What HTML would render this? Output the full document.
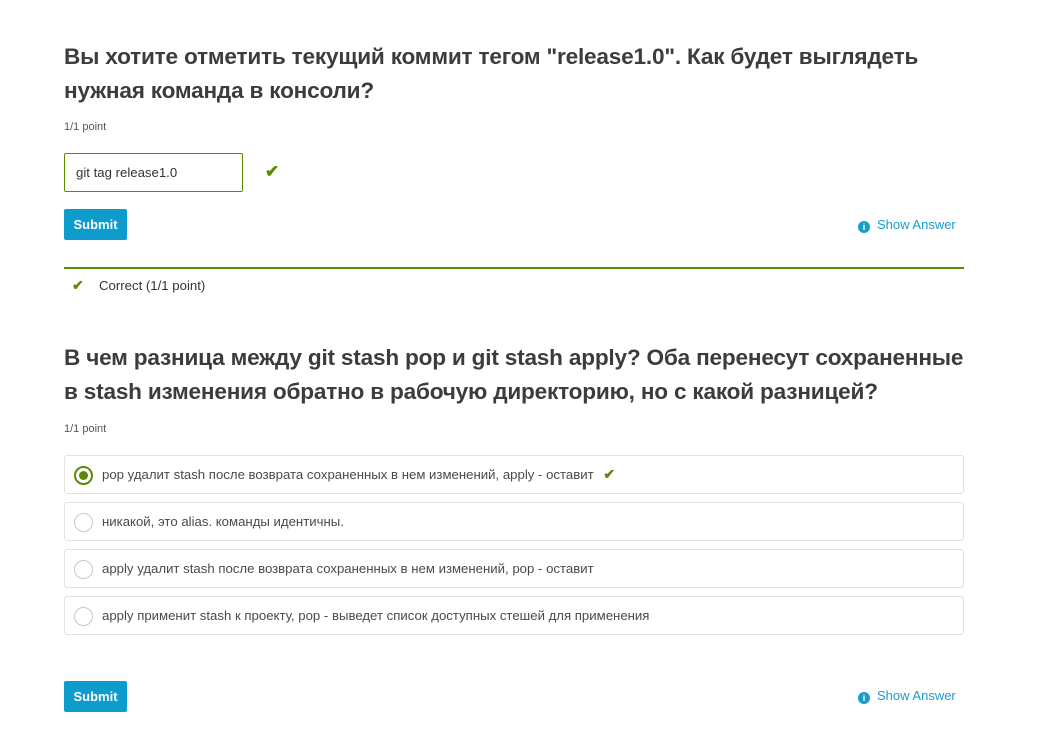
<!DOCTYPE html>
<html><head><meta charset="utf-8"><style>
*{margin:0;padding:0;box-sizing:border-box}
body{width:1050px;height:739px;background:#fff;font-family:"Liberation Sans",sans-serif;color:#313131;position:relative;overflow:hidden}
.a{position:absolute}
h2{position:absolute;left:64px;white-space:nowrap;font-size:22.6px;font-weight:bold;line-height:34px;color:#3c3c3c;letter-spacing:-0.2px}
.pt{font-size:11px;color:#555}
.btn{background:#0e9ccd;color:#fff;font-weight:bold;font-size:13px;border-radius:2px;width:63px;height:31px;line-height:31px;text-align:center}
.sa{color:#1a9dcc;font-size:13px}
.sa i{display:inline-block;width:12px;height:12px;border-radius:50%;background:#1a9dcc;color:#fff;font-style:normal;font-size:9px;line-height:12px;text-align:center;font-weight:bold;margin-right:7px;vertical-align:-1px}
.ck{color:#5e8a00;font-size:17px;font-weight:bold}
.opt{position:absolute;left:64px;width:900px;height:39px;border:1px solid #e1e1e1;border-radius:3px;font-size:13.2px;color:#4a4a4a;line-height:37px;padding-left:37px}
.opt .r{position:absolute;left:9px;top:10px;width:19px;height:19px;border-radius:50%;border:1px solid #c8c8c8}
.opt .r.s{border:2px solid #5e8a00}
.opt .r.s:after{content:"";position:absolute;left:3px;top:3px;width:9px;height:9px;border-radius:50%;background:#5e8a00}
</style></head><body>
<h2 style="top:40px">Вы хотите отметить текущий коммит тегом "release1.0". Как будет выглядеть<br>нужная команда в консоли?</h2>
<div class="a pt" style="left:64px;top:121px">1/1 point</div>
<div class="a" style="left:64px;top:153px;width:179px;height:39px;border:1px solid #5e8a00;border-radius:2px;font-size:13.2px;line-height:37px;padding-left:11px;color:#333">git tag release1.0</div>
<div class="a ck" style="left:265px;top:162px">✔</div>
<div class="a btn" style="left:64px;top:209px">Submit</div>
<div class="a sa" style="left:858px;top:217px"><i>i</i>Show Answer</div>
<div class="a" style="left:64px;top:267px;width:900px;height:2px;background:#5e8a00"></div>
<div class="a ck" style="left:72px;top:277px;font-size:14px">✔</div>
<div class="a" style="left:99px;top:278px;font-size:13.2px;color:#333">Correct (1/1 point)</div>
<h2 style="top:341px">В чем разница между git stash pop и git stash apply? Оба перенесут сохраненные<br>в stash изменения обратно в рабочую директорию, но с какой разницей?</h2>
<div class="a pt" style="left:64px;top:423px">1/1 point</div>
<div class="opt" style="top:455px"><span class="r s"></span>pop удалит stash после возврата сохраненных в нем изменений, apply - оставит <span class="ck" style="font-size:14px;margin-left:6px">✔</span></div>
<div class="opt" style="top:502px"><span class="r"></span>никакой, это alias. команды идентичны.</div>
<div class="opt" style="top:549px"><span class="r"></span>apply удалит stash после возврата сохраненных в нем изменений, pop - оставит</div>
<div class="opt" style="top:596px"><span class="r"></span>apply применит stash к проекту, pop - выведет список доступных стешей для применения</div>
<div class="a btn" style="left:64px;top:681px">Submit</div>
<div class="a sa" style="left:858px;top:688px"><i>i</i>Show Answer</div>
</body></html>
